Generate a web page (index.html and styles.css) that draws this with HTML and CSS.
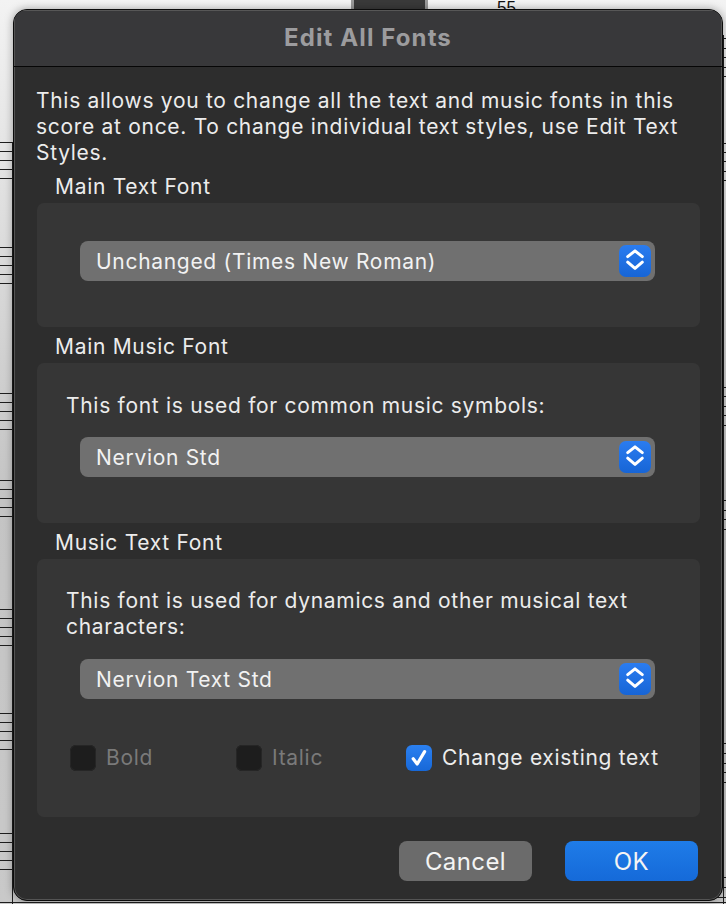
FILE: index.html
```html
<!DOCTYPE html>
<html lang="en">
<head>
<meta charset="utf-8">
<title>Edit All Fonts</title>
<link rel="stylesheet" href="styles.css">
</head>
<body>
<div class="score">
  <svg class="score-art" width="726" height="904" viewBox="0 0 726 904">
    <rect x="351" y="0" width="77" height="10" fill="#9a9a9a"/>
    <rect x="354" y="0" width="71" height="10" fill="#3a3a3a"/>
    <text x="497" y="13" class="bar-num">55</text>
    <g stroke="#1e1e1e" stroke-width="1">
      <line x1="12.5" y1="142" x2="12.5" y2="904"/>
      <path d="M0 142.5H14M0 151.5H14M0 160.5H14M0 169.5H14M0 178.5H14"/>
      <path d="M0 247.5H14M0 256.5H14M0 265.5H14M0 274.5H14M0 283.5H14"/>
      <path d="M0 393.5H14M0 402.5H14M0 411.5H14M0 420.5H14M0 429.5H14"/>
      <path d="M0 480.5H14M0 489.5H14M0 498.5H14M0 507.5H14M0 516.5H14"/>
      <path d="M0 609.5H14M0 618.5H14M0 627.5H14M0 636.5H14M0 645.5H14"/>
      <path d="M0 713.5H14M0 722.5H14M0 731.5H14M0 740.5H14M0 749.5H14"/>
      <path d="M0 833.5H14M0 842.5H14M0 851.5H14M0 860.5H14M0 869.5H14"/>
      <line x1="723.5" y1="35" x2="723.5" y2="904"/>
      <path d="M716 38.5H726M716 48.5H726M716 57.5H726M716 67.5H726M716 76.5H726"/>
      <path d="M716 143.5H726M716 152.5H726M716 161.5H726M716 171.5H726M716 180.5H726"/>
      <path d="M716 387.5H726M716 396.5H726M716 406.5H726M716 415.5H726M716 425.5H726"/>
      <path d="M716 500.5H726M716 510.5H726M716 519.5H726M716 529.5H726"/>
      <path d="M716 743.5H726M716 753.5H726M716 763.5H726M716 772.5H726M716 782.5H726"/>
      <path d="M716 877.5H726M716 887.5H726M716 897.5H726"/>
      <path d="M0 902.5H726"/>
    </g>
  </svg>
</div>

<div class="dialog">
  <div class="titlebar">Edit All Fonts</div>
  <div class="content">
    <p class="intro">This allows you to change all the text and music fonts in this score at once. To change individual text styles, use Edit Text Styles.</p>

    <div class="section-label">Main Text Font</div>
    <div class="group group-first">
      <div class="select">
        <span class="select-text">Unchanged (Times New Roman)</span>
        <span class="stepper">
          <svg width="32" height="32" viewBox="0 0 32 32"><path d="M8.7 11.6 16 5.8 23.3 11.6M8.7 17.2 16 23.4 23.3 17.2" fill="none" stroke="#fff" stroke-width="3" stroke-linecap="round" stroke-linejoin="round"/></svg>
        </span>
      </div>
    </div>

    <div class="section-label">Main Music Font</div>
    <div class="group">
      <div class="group-text">This font is used for common music symbols:</div>
      <div class="select select-indent">
        <span class="select-text">Nervion Std</span>
        <span class="stepper">
          <svg width="32" height="32" viewBox="0 0 32 32"><path d="M8.7 11.6 16 5.8 23.3 11.6M8.7 17.2 16 23.4 23.3 17.2" fill="none" stroke="#fff" stroke-width="3" stroke-linecap="round" stroke-linejoin="round"/></svg>
        </span>
      </div>
    </div>

    <div class="section-label">Music Text Font</div>
    <div class="group group-last">
      <div class="group-text">This font is used for dynamics and other musical text characters:</div>
      <div class="select select-indent">
        <span class="select-text">Nervion Text Std</span>
        <span class="stepper">
          <svg width="32" height="32" viewBox="0 0 32 32"><path d="M8.7 11.6 16 5.8 23.3 11.6M8.7 17.2 16 23.4 23.3 17.2" fill="none" stroke="#fff" stroke-width="3" stroke-linecap="round" stroke-linejoin="round"/></svg>
        </span>
      </div>
      <div class="checks">
        <label class="check disabled"><span class="box"></span><span class="check-label">Bold</span></label>
        <label class="check disabled"><span class="box"></span><span class="check-label">Italic</span></label>
        <label class="check"><span class="box box-on"><svg width="26" height="26" viewBox="0 0 26 26"><path d="M7.2 13.8 11.2 19 18.6 6.6" fill="none" stroke="#fff" stroke-width="3.2" stroke-linecap="round" stroke-linejoin="round"/></svg></span><span class="check-label">Change existing text</span></label>
      </div>
    </div>

    <div class="buttons">
      <button class="btn btn-cancel">Cancel</button>
      <button class="btn btn-ok">OK</button>
    </div>
  </div>
</div>
</body>
</html>
```

FILE: styles.css
```css
* {
  box-sizing: border-box;
}

html, body {
  margin: 0;
  padding: 0;
}

body {
  width: 726px;
  height: 904px;
  overflow: hidden;
  position: relative;
  padding: 9px 0 0 13px;
  font-family: Inter, "Noto Sans", "Liberation Sans", sans-serif;
  background: linear-gradient(to bottom, #f3f3f3 0%, #d9d9d9 30%, #c4c4c4 55%, #c9c9c9 100%);
}

.score {
  position: absolute;
  left: 0;
  top: 0;
  width: 726px;
  height: 904px;
  z-index: 0;
}

.score-art {
  display: block;
}

.bar-num {
  font-family: "Liberation Sans", sans-serif;
  font-size: 17px;
  fill: #111;
}

.dialog {
  position: relative;
  z-index: 1;
  width: 710px;
  height: 892px;
  border-radius: 14px;
  border: 1px solid #0c0c0c;
  background: #2d2d2d;
  box-shadow: inset 0 0 0 1px #545454, 0 0 8px rgba(0, 0, 0, 0.35);
  display: flex;
  flex-direction: column;
  overflow: hidden;
}

.titlebar {
  height: 57px;
  line-height: 55px;
  text-align: center;
  font-size: 24px;
  font-weight: 700;
  letter-spacing: 1.1px;
  color: #9c9c9e;
  background: #38383a;
  border-bottom: 1px solid #060606;
  box-shadow: inset 0 1px 0 #575757, inset 1px 0 0 #545454, inset -1px 0 0 #545454;
}

.content {
  display: flex;
  flex-direction: column;
  padding: 21px 22px 0 22px;
  color: #ececec;
  font-size: 21px;
  letter-spacing: 0.7px;
}

.intro {
  margin: 0;
  line-height: 26px;
}

.section-label {
  line-height: 26px;
  padding-left: 19px;
  margin-top: 7px;
}

.intro + .section-label {
  margin-top: 8px;
}

.group {
  margin: 3px 0 0 1px;
  background: #363636;
  border-radius: 7px;
  padding: 30px 45px 46px 29px;
}

.group-first {
  padding: 38px 45px 46px 43px;
}

.group-last {
  padding-top: 29px;
}

.group-text {
  line-height: 26px;
}

.select {
  height: 40px;
  border-radius: 8px;
  background: #707070;
  display: flex;
  align-items: center;
  justify-content: space-between;
  padding: 0 4px 0 16px;
  color: #f2f2f2;
}

.select-indent {
  margin-left: 14px;
  margin-top: 18px;
}

.group-last .select-indent {
  margin-top: 19px;
}

.stepper {
  width: 32px;
  height: 32px;
  border-radius: 7px;
  background: linear-gradient(to bottom, #2a7cf0, #1765d6);
  display: flex;
}

.stepper svg {
  display: block;
}

.checks {
  display: grid;
  grid-template-columns: 166px 170px 1fr;
  margin: 46px -40px 0 4px;
  line-height: 26px;
}

.check {
  display: flex;
  align-items: center;
  gap: 10px;
  white-space: nowrap;
}

.box {
  flex: none;
  width: 26px;
  height: 26px;
  border-radius: 6px;
  background: #1d1d1d;
  box-shadow: inset 0 0 0 1px #262626;
  display: flex;
}

.box-on {
  background: linear-gradient(to bottom, #2b80f0, #1768d8);
  box-shadow: none;
}

.disabled .check-label {
  color: #7a7a7a;
}

.buttons {
  display: flex;
  justify-content: flex-end;
  gap: 33px;
  margin: 24px 2px 0 0;
}

.btn {
  width: 133px;
  height: 40px;
  border: none;
  border-radius: 8px;
  font-family: inherit;
  font-size: 24px;
  letter-spacing: 0.4px;
  color: #f4f4f4;
  padding: 0;
}

.btn-cancel {
  background: #6b6b6b;
}

.btn-ok {
  background: linear-gradient(to bottom, #1f7ce8, #156ad9);
}
```
